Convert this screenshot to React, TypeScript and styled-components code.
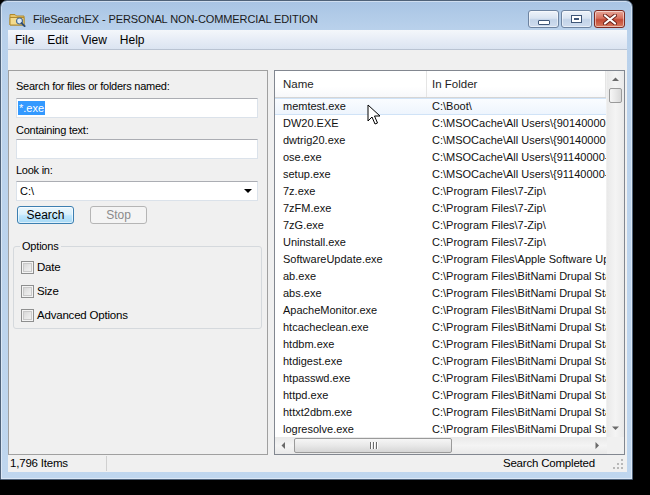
import React from "react";
import styled, { createGlobalStyle } from "styled-components";

const GlobalStyle = createGlobalStyle`
    html, body {
        margin: 0;
        padding: 0;
        width: 650px;
        height: 495px;
        overflow: hidden;
        background: #000;
    }
    #root {
        position: relative;
        width: 650px;
        height: 495px;
    }
`;

const UI_FONT = `"Liberation Sans", Arial, sans-serif`;

const files: [string, string][] = [
    ["memtest.exe", "C:\\Boot\\"],
    ["DW20.EXE", "C:\\MSOCache\\All Users\\{90140000-0011-0000-0000-0000000FF1CE}-C\\"],
    ["dwtrig20.exe", "C:\\MSOCache\\All Users\\{90140000-0011-0000-0000-0000000FF1CE}-C\\"],
    ["ose.exe", "C:\\MSOCache\\All Users\\{91140000-0011-0000-0000-0000000FF1CE}-C\\"],
    ["setup.exe", "C:\\MSOCache\\All Users\\{91140000-0011-0000-0000-0000000FF1CE}-C\\"],
    ["7z.exe", "C:\\Program Files\\7-Zip\\"],
    ["7zFM.exe", "C:\\Program Files\\7-Zip\\"],
    ["7zG.exe", "C:\\Program Files\\7-Zip\\"],
    ["Uninstall.exe", "C:\\Program Files\\7-Zip\\"],
    ["SoftwareUpdate.exe", "C:\\Program Files\\Apple Software Update\\"],
    ["ab.exe", "C:\\Program Files\\BitNami Drupal Stack\\apache2\\bin\\"],
    ["abs.exe", "C:\\Program Files\\BitNami Drupal Stack\\apache2\\bin\\"],
    ["ApacheMonitor.exe", "C:\\Program Files\\BitNami Drupal Stack\\apache2\\bin\\"],
    ["htcacheclean.exe", "C:\\Program Files\\BitNami Drupal Stack\\apache2\\bin\\"],
    ["htdbm.exe", "C:\\Program Files\\BitNami Drupal Stack\\apache2\\bin\\"],
    ["htdigest.exe", "C:\\Program Files\\BitNami Drupal Stack\\apache2\\bin\\"],
    ["htpasswd.exe", "C:\\Program Files\\BitNami Drupal Stack\\apache2\\bin\\"],
    ["httpd.exe", "C:\\Program Files\\BitNami Drupal Stack\\apache2\\bin\\"],
    ["httxt2dbm.exe", "C:\\Program Files\\BitNami Drupal Stack\\apache2\\bin\\"],
    ["logresolve.exe", "C:\\Program Files\\BitNami Drupal Stack\\apache2\\bin\\"],
];

const AppIcon = () => (
    <svg width="17" height="16" viewBox="0 0 17 16">
        <path d="M1 3.5h5l1.5 1.5H15v9H1z" fill="#e6c46a" stroke="#b08a2e" strokeWidth="1" />
        <path d="M1 6.5h14v7.5H1z" fill="#f3db8e" stroke="#b08a2e" strokeWidth="1" />
        <circle cx="10.5" cy="10" r="3" fill="#dbe9f7" stroke="#4a6c93" strokeWidth="1.2" />
        <path d="M12.6 12.1l3 3" stroke="#2f4d73" strokeWidth="2" strokeLinecap="round" />
    </svg>
);

const Arrow = ({ dir }: { dir: "up" | "down" | "left" | "right" }) => {
    const pts = {
        up: "1,5 4.5,1.5 8,5",
        down: "1,1.5 4.5,5 8,1.5",
        left: "5,1 1.5,4.5 5,8",
        right: "1.5,1 5,4.5 1.5,8",
    }[dir];
    const vertical = dir === "up" || dir === "down";
    return (
        <svg width={vertical ? 9 : 7} height={vertical ? 7 : 9} viewBox={vertical ? "0 0 9 7" : "0 0 7 9"}>
            <polygon points={pts} fill="#6a6a6a" />
        </svg>
    );
};

export default function App() {
    return (
        <>
            <GlobalStyle />
            <Window>
                <TitleBar>
                    <IconSlot>
                        <AppIcon />
                    </IconSlot>
                    <Title>FileSearchEX - PERSONAL NON-COMMERCIAL EDITION</Title>
                    <CaptionButtons>
                        <CaptionButton $kind="min">
                            <MinGlyph />
                        </CaptionButton>
                        <CaptionButton $kind="max">
                            <MaxGlyph />
                        </CaptionButton>
                        <CaptionButton $kind="close">
                            <svg width="14" height="11" viewBox="0 0 14 11">
                                <path
                                    d="M2 1.5L12 9.5M12 1.5L2 9.5"
                                    stroke="#6b231b"
                                    strokeWidth="4"
                                    strokeLinecap="round"
                                />
                                <path
                                    d="M2 1.5L12 9.5M12 1.5L2 9.5"
                                    stroke="#fff"
                                    strokeWidth="2.2"
                                    strokeLinecap="round"
                                />
                            </svg>
                        </CaptionButton>
                    </CaptionButtons>
                </TitleBar>
                <Client>
                    <MenuBar>
                        <MenuItem>File</MenuItem>
                        <MenuItem>Edit</MenuItem>
                        <MenuItem>View</MenuItem>
                        <MenuItem>Help</MenuItem>
                    </MenuBar>
                    <ToolStrip />
                    <Main>
                        <SearchPanel>
                            <FieldLabel $top={9}>Search for files or folders named:</FieldLabel>
                            <TextBox $top={5}>
                                <Selection>*.exe</Selection>
                            </TextBox>
                            <FieldLabel $top={6}>Containing text:</FieldLabel>
                            <TextBox $top={2} />
                            <FieldLabel $top={5}>Look in:</FieldLabel>
                            <TextBox $top={4}>
                                <ComboText>C:\</ComboText>
                                <ComboArrow />
                            </TextBox>
                            <ButtonRow>
                                <PushButton $default>Search</PushButton>
                                <PushButton $disabled>Stop</PushButton>
                            </ButtonRow>
                            <GroupBox>
                                <Legend>Options</Legend>
                                {["Date", "Size", "Advanced Options"].map(label => (
                                    <CheckRow key={label}>
                                        <CheckBox />
                                        {label}
                                    </CheckRow>
                                ))}
                            </GroupBox>
                        </SearchPanel>
                        <ListView>
                            <ListBody>
                                <ListContent>
                                    <Header>
                                        <HeaderCell $width={152} $pad={8}>
                                            Name
                                        </HeaderCell>
                                        <HeaderCell $pad={5}>In Folder</HeaderCell>
                                    </Header>
                                    {files.map(([name, folder], i) => (
                                        <Row key={i} $hot={i === 0}>
                                            <Cell $width={152} $pad={8}>
                                                {name}
                                            </Cell>
                                            <Cell $pad={5}>{folder}</Cell>
                                        </Row>
                                    ))}
                                </ListContent>
                                <VScroll>
                                    <ScrollArrow $vertical>
                                        <Arrow dir="up" />
                                    </ScrollArrow>
                                    <VThumb />
                                    <Track />
                                    <ScrollArrow $vertical>
                                        <Arrow dir="down" />
                                    </ScrollArrow>
                                </VScroll>
                            </ListBody>
                            <HScroll>
                                <ScrollArrow>
                                    <Arrow dir="left" />
                                </ScrollArrow>
                                <HThumb>
                                    <Gripper>
                                        <i />
                                        <i />
                                        <i />
                                    </Gripper>
                                </HThumb>
                                <Track />
                                <ScrollArrow>
                                    <Arrow dir="right" />
                                </ScrollArrow>
                                <Corner />
                            </HScroll>
                        </ListView>
                    </Main>
                    <StatusBar>
                        <StatusCell>1,796 Items</StatusCell>
                        <StatusText>Search Completed</StatusText>
                        <SizeGrip>
                            <svg width="12" height="12" viewBox="0 0 12 12">
                                {[
                                    [9, 1],
                                    [9, 5],
                                    [5, 5],
                                    [9, 9],
                                    [5, 9],
                                    [1, 9],
                                ].map(([x, y], i) => (
                                    <rect key={i} x={x} y={y} width="2" height="2" fill="#b8b8b8" />
                                ))}
                            </svg>
                        </SizeGrip>
                    </StatusBar>
                </Client>
            </Window>
            <Pointer>
                <svg width="14" height="22" viewBox="0 0 14 22">
                    <path
                        d="M1 1v16l4-4 3 7 2.5-1-3-7h5.5z"
                        fill="#fff"
                        stroke="#000"
                        strokeWidth="1"
                        strokeLinejoin="round"
                    />
                </svg>
            </Pointer>
        </>
    );
}

const Window = styled.div`
    width: 633px;
    height: 480px;
    box-sizing: border-box;
    display: flex;
    flex-direction: column;
    border: 1px solid #4f6279;
    border-radius: 7px 7px 0 0;
    background: linear-gradient(180deg, #a8c4e4 0px, #b9d1eb 28px, #bfd6ee 100%);
    box-shadow: inset 0 0 0 1px rgba(255, 255, 255, 0.45);
    font-family: ${UI_FONT};
    font-size: 11px;
    color: #000;
`;

const TitleBar = styled.div`
    height: 29px;
    display: flex;
    align-items: flex-start;
    flex-shrink: 0;
`;

const IconSlot = styled.div`
    margin: 10px 0 0 8px;
    width: 17px;
    height: 16px;
`;

const Title = styled.div`
    margin: 10px 0 0 7px;
    font-size: 11px;
    letter-spacing: -0.1px;
    line-height: 16px;
    color: #1a1a1a;
    white-space: nowrap;
    flex: 1;
`;

const CaptionButtons = styled.div`
    display: flex;
    gap: 2px;
    margin: 9px 7px 0 0;
`;

const CaptionButton = styled.div<{ $kind: "min" | "max" | "close" }>`
    width: 31px;
    height: 18px;
    box-sizing: border-box;
    border-radius: 3px;
    display: flex;
    align-items: center;
    justify-content: center;
    border: 1px solid ${p => (p.$kind === "close" ? "#7d2a22" : "#6d83a0")};
    background: ${p =>
        p.$kind === "close"
            ? "linear-gradient(180deg, #e8a799 0%, #d6715e 45%, #c34a36 55%, #d77a5f 100%)"
            : "linear-gradient(180deg, #eef3fa 0%, #d9e4f1 45%, #c2d3e8 55%, #cfdcee 100%)"};
    box-shadow: inset 0 0 0 1px rgba(255, 255, 255, 0.5);
`;

const MinGlyph = styled.div`
    width: 10px;
    height: 3px;
    margin-top: 6px;
    background: #fff;
    border: 1px solid #3f5677;
    border-radius: 1px;
`;

const MaxGlyph = styled.div`
    width: 9px;
    height: 6px;
    border: 1px solid #3f5677;
    box-shadow: inset 0 0 0 2px #fff, inset 0 0 0 3px #3f5677;
    background: #fff;
`;

const Client = styled.div`
    flex: 1;
    margin: 0 5px 7px 7px;
    background: #f0f0f0;
    display: flex;
    flex-direction: column;
`;

const MenuBar = styled.div`
    height: 20px;
    box-sizing: border-box;
    display: flex;
    align-items: center;
    padding-left: 1px;
    background: linear-gradient(180deg, #f4f7fb 0%, #e6ecf6 55%, #dbe4f1 100%);
    border-bottom: 1px solid #b9c3d2;
    font-size: 12px;
`;

const MenuItem = styled.span`
    padding: 0 6px 0 6px;
    margin-right: 1px;
    line-height: 18px;
`;

const ToolStrip = styled.div`
    height: 20px;
    flex-shrink: 0;
`;

const Main = styled.div`
    display: flex;
    gap: 6px;
    height: 385px;
    padding-right: 2px;
`;

const SearchPanel = styled.div`
    width: 260px;
    box-sizing: border-box;
    border: 1px solid #a0a0a0;
    display: flex;
    flex-direction: column;
    padding: 0 9px 0 7px;
    height: 385px;
`;

const FieldLabel = styled.div<{ $top: number }>`
    margin-top: ${p => p.$top}px;
    line-height: 13px;
    letter-spacing: -0.25px;
    white-space: nowrap;
`;

const TextBox = styled.div<{ $top: number }>`
    margin-top: ${p => p.$top}px;
    height: 20px;
    box-sizing: border-box;
    background: #fff;
    border: 1px solid #dbe2ea;
    border-top-color: #abadb3;
    display: flex;
    align-items: center;
    padding: 0 2px 0 1px;
`;

const Selection = styled.span`
    background: #3399ff;
    color: #fff;
    line-height: 14px;
    padding: 0 1px 0 1px;
`;

const ComboText = styled.span`
    flex: 1;
    padding-left: 2px;
`;

const ComboArrow = styled.span`
    width: 0;
    height: 0;
    border-left: 4px solid transparent;
    border-right: 4px solid transparent;
    border-top: 4px solid #000;
    margin-right: 3px;
`;

const ButtonRow = styled.div`
    display: flex;
    gap: 16px;
    margin-top: 5px;
    padding-left: 1px;
`;

const PushButton = styled.div<{ $default?: boolean; $disabled?: boolean }>`
    width: 57px;
    height: 18px;
    box-sizing: border-box;
    border-radius: 3px;
    display: flex;
    align-items: center;
    justify-content: center;
    font-size: 12px;
    color: ${p => (p.$disabled ? "#8b8b8b" : "#000")};
    border: 1px solid ${p => (p.$default ? "#3c7fb1" : "#b5b5b5")};
    background: ${p =>
        p.$default
            ? "linear-gradient(180deg, #eaf6fd 0%, #d9f0fc 45%, #bee6fd 55%, #a7d9f5 100%)"
            : "#f4f4f4"};
    box-shadow: ${p => (p.$default ? "inset 0 0 0 1px rgba(255,255,255,0.6)" : "none")};
`;

const GroupBox = styled.div`
    position: relative;
    margin: 22px -4px 0 -3px;
    height: 83px;
    box-sizing: border-box;
    border: 1px solid #d5d9dd;
    border-radius: 3px;
    padding: 8px 0 0 7px;
    display: flex;
    flex-direction: column;
`;

const Legend = styled.span`
    position: absolute;
    top: -7px;
    left: 6px;
    padding: 0 2px;
    line-height: 13px;
    letter-spacing: -0.2px;
    background: #f0f0f0;
`;

const CheckRow = styled.div`
    height: 24px;
    display: flex;
    align-items: center;
    gap: 3px;
    font-size: 11.5px;
    letter-spacing: -0.2px;
`;

const CheckBox = styled.span`
    width: 13px;
    height: 13px;
    box-sizing: border-box;
    border: 1px solid #8e8f8f;
    background: linear-gradient(135deg, #cfcfcf 0%, #e6e6e6 50%, #f6f6f6 100%);
    box-shadow: inset 0 0 0 1px #f4f4f4, inset 0 0 0 2px #c9c9c9;
`;

const ListView = styled.div`
    flex: 1;
    box-sizing: border-box;
    border: 1px solid #828790;
    background: #fff;
    display: flex;
    flex-direction: column;
    overflow: hidden;
    height: 385px;
`;

const ListBody = styled.div`
    flex: 1;
    display: flex;
    min-height: 0;
`;

const ListContent = styled.div`
    flex: 1;
    overflow: hidden;
    min-width: 0;
`;

const Header = styled.div`
    height: 27px;
    box-sizing: border-box;
    display: flex;
    border-bottom: 1px solid #d5d5d5;
    background: linear-gradient(180deg, #ffffff 0%, #ffffff 60%, #f7f8fa 100%);
`;

const HeaderCell = styled.div<{ $width?: number; $pad: number }>`
    ${p => (p.$width ? `width: ${p.$width}px; flex-shrink: 0;` : "flex: 1;")}
    box-sizing: border-box;
    padding-left: ${p => p.$pad}px;
    line-height: 26px;
    font-size: 11.5px;
    border-right: 1px solid #e5e5e5;
    color: #1e1e1e;
`;

const Row = styled.div<{ $hot?: boolean }>`
    height: 17px;
    display: flex;
    box-sizing: border-box;
    white-space: nowrap;
    font-size: 11px;
    line-height: 15px;
    color: #111;
    border-top: 1px solid ${p => (p.$hot ? "#d0e3f7" : "transparent")};
    border-bottom: 1px solid ${p => (p.$hot ? "#d0e3f7" : "transparent")};
    background: ${p => (p.$hot ? "linear-gradient(180deg, #fafcff, #eef5fd)" : "transparent")};
`;

const Cell = styled.div<{ $width?: number; $pad: number }>`
    ${p => (p.$width ? `width: ${p.$width}px; flex-shrink: 0;` : "flex: 1;")}
    box-sizing: border-box;
    padding-left: ${p => p.$pad}px;
    overflow: hidden;
`;

const VScroll = styled.div`
    width: 17px;
    flex-shrink: 0;
    display: flex;
    flex-direction: column;
    align-items: center;
    background: linear-gradient(90deg, #e9e9e9, #f4f4f4 50%, #e9e9e9);
    border-left: 1px solid #f0f0f0;
`;

const ScrollArrow = styled.div<{ $vertical?: boolean }>`
    width: ${p => (p.$vertical ? 17 : 12)}px;
    height: 17px;
    flex-shrink: 0;
    display: flex;
    align-items: center;
    justify-content: center;
`;

const VThumb = styled.div`
    width: 13px;
    height: 15px;
    flex-shrink: 0;
    box-sizing: border-box;
    border: 1px solid #9a9a9a;
    border-radius: 2px;
    background: linear-gradient(90deg, #f6f6f6, #e8e8e8 50%, #d8d8d8);
`;

const Track = styled.div`
    flex: 1;
`;

const HScroll = styled.div`
    height: 17px;
    flex-shrink: 0;
    display: flex;
    align-items: center;
    background: linear-gradient(180deg, #e9e9e9, #f4f4f4 50%, #e9e9e9);
    padding-left: 2px;
`;

const HThumb = styled.div`
    width: 158px;
    height: 15px;
    box-sizing: border-box;
    margin-left: 5px;
    border: 1px solid #9a9a9a;
    border-radius: 2px;
    background: linear-gradient(180deg, #f6f6f6, #e8e8e8 50%, #d6d6d6);
    display: flex;
    align-items: center;
    justify-content: center;
`;

const Gripper = styled.div`
    display: flex;
    gap: 2px;
    i {
        width: 1px;
        height: 7px;
        background: #6b6b6b;
        box-shadow: 1px 0 0 #fff;
    }
`;

const Corner = styled.div`
    width: 17px;
    height: 17px;
    margin-left: 4px;
    background: #f0f0f0;
`;

const StatusBar = styled.div`
    height: 17px;
    display: flex;
    align-items: center;
    font-size: 11.5px;
    letter-spacing: -0.2px;
`;

const StatusCell = styled.div`
    width: 99px;
    height: 15px;
    box-sizing: border-box;
    padding-left: 2px;
    line-height: 15px;
    border-right: 1px solid #d0d0d0;
`;

const StatusText = styled.div`
    flex: 1;
    text-align: right;
    padding-right: 45px;
    line-height: 15px;
`;

const SizeGrip = styled.div`
    width: 12px;
    height: 12px;
    margin-right: 3px;
    margin-left: -28px;
`;

const Pointer = styled.div`
    position: absolute;
    left: 367px;
    top: 104px;
`;
